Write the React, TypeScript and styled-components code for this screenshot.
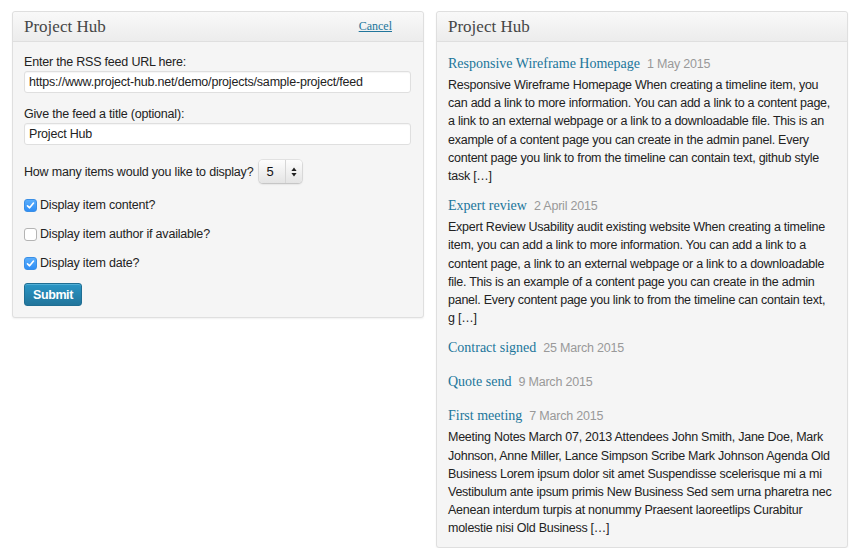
import React, { useState } from 'react';
import styled, { createGlobalStyle } from 'styled-components';

const GlobalStyle = createGlobalStyle`
  body {
    margin: 0;
    background: #ffffff;
    font-family: "Liberation Sans", Arial, sans-serif;
    color: #333;
  }
`;

const Page = styled.div`
  display: grid;
  grid-template-columns: 412px 412px;
  gap: 12px;
  align-items: start;
  padding: 11px 0 0 12px;
`;

const Panel = styled.section`
  background: #f5f5f5;
  border: 1px solid #dfdfdf;
  border-radius: 3px;
  box-shadow: 0 1px 2px rgba(0, 0, 0, 0.06);
`;

const PanelHeader = styled.header`
  display: flex;
  align-items: center;
  justify-content: space-between;
  height: 29px;
  padding: 0 31px 0 11px;
  background: linear-gradient(to bottom, #f9f9f9, #ececec);
  border-bottom: 1px solid #dfdfdf;
  border-radius: 3px 3px 0 0;
`;

const PanelTitle = styled.h3`
  margin: 0;
  font-family: "Liberation Serif", "Times New Roman", serif;
  font-size: 17px;
  font-weight: normal;
  color: #464646;
`;

const CancelLink = styled.a`
  font-family: "Liberation Serif", "Times New Roman", serif;
  font-size: 12px;
  color: #21759b;
  text-decoration: underline;
`;

const FormBody = styled.form`
  padding: 11px 12px 11px 11px;
  font-size: 12.5px;
  letter-spacing: -0.2px;
  color: #222;
`;

const Field = styled.div`
  margin-bottom: 12px;
`;

const Label = styled.label`
  display: block;
  line-height: 18px;
`;

const TextInput = styled.input`
  box-sizing: border-box;
  width: 100%;
  height: 22px;
  padding: 0 4px;
  border: 1px solid #dfdfdf;
  border-radius: 3px;
  background: #fff;
  box-shadow: inset 0 1px 1px rgba(0, 0, 0, 0.04);
  font-family: "Liberation Sans", Arial, sans-serif;
  font-size: 12.5px;
  letter-spacing: -0.2px;
  color: #222;
`;

const SelectRow = styled.div`
  display: flex;
  align-items: center;
  gap: 6px;
  margin: 15px 0 13px;
  line-height: 18px;
`;

const SelectBox = styled.div`
  display: flex;
  width: 43px;
  height: 23px;
  border-radius: 4px;
  background: linear-gradient(to bottom, #fdfdfd, #e4e4e4);
  box-shadow: 0 0 0 1px rgba(0, 0, 0, 0.07), 0 1px 2px rgba(0, 0, 0, 0.18);
`;

const SelectValue = styled.span`
  flex: 1;
  padding-left: 7px;
  line-height: 23px;
  font-size: 13px;
  color: #111;
`;

const SelectArrows = styled.span`
  display: flex;
  align-items: center;
  justify-content: center;
  width: 16px;
  border-left: 1px solid #d6d6d6;
`;

const CheckRow = styled.label`
  display: flex;
  align-items: center;
  gap: 3px;
  line-height: 18px;
  margin-bottom: 11px;
`;

const Box = styled.span<{ $checked: boolean }>`
  display: inline-flex;
  align-items: center;
  justify-content: center;
  box-sizing: border-box;
  width: 13px;
  height: 13px;
  border-radius: 3px;
  background: ${(p) => (p.$checked ? 'linear-gradient(to bottom, #5aaefc, #2f8ef5)' : '#fff')};
  border: 1px solid ${(p) => (p.$checked ? '#3a8fe6' : '#b4b4b4')};
`;

const SubmitButton = styled.button`
  height: 23px;
  padding: 0 8px;
  border: 1px solid #1f6e93;
  border-radius: 3px;
  background: linear-gradient(to bottom, #2a95c5, #21759b);
  box-shadow: inset 0 1px 0 rgba(120, 200, 230, 0.5);
  color: #fff;
  font-family: "Liberation Sans", Arial, sans-serif;
  font-size: 12.5px;
  font-weight: bold;
  letter-spacing: -0.4px;
`;

const FeedList = styled.ul`
  list-style: none;
  margin: 0;
  padding: 9px 12px 1px 11px;
`;

const FeedItem = styled.li`
  margin-bottom: 10px;
`;

const ItemHead = styled.div`
  height: 24px;
  line-height: 24px;
  white-space: nowrap;
`;

const ItemLink = styled.a`
  font-family: "Liberation Serif", "Times New Roman", serif;
  font-size: 14px;
  color: #21759b;
  text-decoration: none;
`;

const ItemDate = styled.span`
  margin-left: 7px;
  font-size: 12.5px;
  letter-spacing: -0.2px;
  color: #999;
`;

const Summary = styled.div`
  margin: 1px 0 -2px;
  font-size: 12.5px;
  line-height: 18.2px;
  letter-spacing: -0.25px;
  color: #222;
`;

const Check: React.FC<{ checked: boolean; label: string; onToggle: () => void }> = ({ checked, label, onToggle }) => (
  <CheckRow onClick={onToggle}>
    <Box $checked={checked}>
      {checked && (
        <svg width="9" height="9" viewBox="0 0 9 9">
          <path d="M1.5 4.8 L3.6 6.8 L7.5 2" fill="none" stroke="#fff" strokeWidth="1.6" strokeLinecap="round" strokeLinejoin="round" />
        </svg>
      )}
    </Box>
    {label}
  </CheckRow>
);

const feed = [
  {
    title: 'Responsive Wireframe Homepage',
    date: '1 May 2015',
    summary:
      'Responsive Wireframe Homepage When creating a timeline item, you can add a link to more information. You can add a link to a content page, a link to an external webpage or a link to a downloadable file. This is an example of a content page you can create in the admin panel. Every content page you link to from the timeline can contain text, github style task […]',
  },
  {
    title: 'Expert review',
    date: '2 April 2015',
    summary:
      'Expert Review Usability audit existing website When creating a timeline item, you can add a link to more information. You can add a link to a content page, a link to an external webpage or a link to a downloadable file. This is an example of a content page you can create in the admin panel. Every content page you link to from the timeline can contain text, g […]',
  },
  { title: 'Contract signed', date: '25 March 2015' },
  { title: 'Quote send', date: '9 March 2015' },
  {
    title: 'First meeting',
    date: '7 March 2015',
    summary:
      'Meeting Notes March 07, 2013 Attendees John Smith, Jane Doe, Mark Johnson, Anne Miller, Lance Simpson Scribe Mark Johnson Agenda Old Business Lorem ipsum dolor sit amet Suspendisse scelerisque mi a mi Vestibulum ante ipsum primis New Business Sed sem urna pharetra nec Aenean interdum turpis at nonummy Praesent laoreetlips Curabitur molestie nisi Old Business […]',
  },
];

export default function App() {
  const [opts, setOpts] = useState({ content: true, author: false, date: true });
  const toggle = (key: keyof typeof opts) => setOpts((o) => ({ ...o, [key]: !o[key] }));

  return (
    <>
      <GlobalStyle />
      <Page>
        <Panel>
          <PanelHeader>
            <PanelTitle>Project Hub</PanelTitle>
            <CancelLink href="#">Cancel</CancelLink>
          </PanelHeader>
          <FormBody onSubmit={(e) => e.preventDefault()}>
            <Field>
              <Label>Enter the RSS feed URL here:</Label>
              <TextInput defaultValue="https://www.project-hub.net/demo/projects/sample-project/feed" />
            </Field>
            <Field>
              <Label>Give the feed a title (optional):</Label>
              <TextInput defaultValue="Project Hub" />
            </Field>
            <SelectRow>
              How many items would you like to display?
              <SelectBox>
                <SelectValue>5</SelectValue>
                <SelectArrows>
                  <svg width="6" height="10" viewBox="0 0 6 10">
                    <path d="M3 0.5 L5.6 4 H0.4 Z M3 9.5 L5.6 6 H0.4 Z" fill="#222" />
                  </svg>
                </SelectArrows>
              </SelectBox>
            </SelectRow>
            <Check checked={opts.content} label="Display item content?" onToggle={() => toggle('content')} />
            <Check checked={opts.author} label="Display item author if available?" onToggle={() => toggle('author')} />
            <Check checked={opts.date} label="Display item date?" onToggle={() => toggle('date')} />
            <SubmitButton type="submit">Submit</SubmitButton>
          </FormBody>
        </Panel>

        <Panel>
          <PanelHeader>
            <PanelTitle>Project Hub</PanelTitle>
          </PanelHeader>
          <FeedList>
            {feed.map((item) => (
              <FeedItem key={item.title}>
                <ItemHead>
                  <ItemLink href="#">{item.title}</ItemLink>
                  <ItemDate>{item.date}</ItemDate>
                </ItemHead>
                {item.summary && <Summary>{item.summary}</Summary>}
              </FeedItem>
            ))}
          </FeedList>
        </Panel>
      </Page>
    </>
  );
}
